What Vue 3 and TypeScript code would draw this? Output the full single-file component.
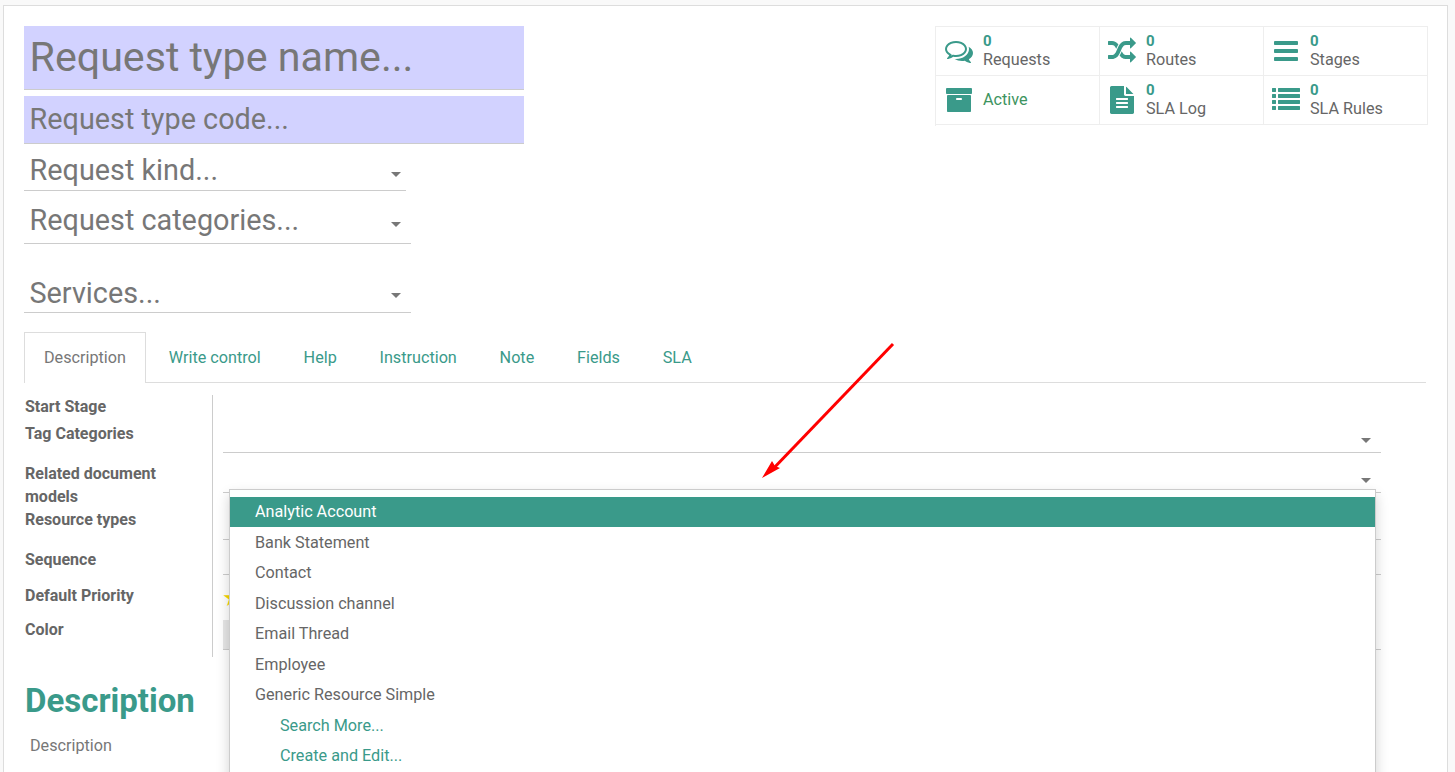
<script setup lang="ts">
type Stat = {
  label: string;
  count?: number;
  d: string;
};

const bars =
  "M1664 1344v128q0 26-19 45t-45 19h-1408q-26 0-45-19t-19-45v-128q0-26 19-45t45-19h1408q26 0 45 19t19 45zm0-512v128q0 26-19 45t-45 19h-1408q-26 0-45-19t-19-45v-128q0-26 19-45t45-19h1408q26 0 45 19t19 45zm0-512v128q0 26-19 45t-45 19h-1408q-26 0-45-19t-19-45v-128q0-26 19-45t45-19h1408q26 0 45 19t19 45z";

const stats: Stat[] = [
  {
    label: "Requests",
    count: 0,
    d: "M704 384q-153 0-286 52t-211.5 141-78.5 191q0 82 53 158t149 132l97 56-35 84q34-20 62-39l44-31 53 10q82 15 153 15 153 0 286-52t211.5-141 78.5-191-78.5-191-211.5-141-286-52zm0-128q191 0 353.5 68.5t256.5 186.5 94 257-94 257-256.5 186.5-353.5 68.5q-86 0-176-16-124 88-278 128-36 9-86 16h-3q-11 0-20.5-8t-11.5-21q-1-3-1-6.5t.5-6.5 2-6l2.5-5 3.5-5.5 4-5 4.5-5 4-4.5q5-6 23-25t26-29.5 22.5-29 25-38.5 20.5-44q-124-72-195-177t-71-224q0-139 94-257t256.5-186.5 353.5-68.5zm822 1169q10 24 20.5 44t25 38.5 22.5 29 26 29.5 23 25q1 1 4 4.5t4.5 5 4 5 3.5 5.5l2.5 5 2 6 .5 6.5-1 6.5q-3 14-13 22t-22 7q-50-7-86-16-154-40-278-128-90 16-176 16-271 0-472-132 58 4 88 4 161 0 309-45t264-129q125-92 192-212t67-254q0-77-23-152 129 71 204 178t75 230q0 120-71 224.5t-195 176.5z",
  },
  {
    label: "Routes",
    count: 0,
    d: "M666 481q-60 92-137 273-22-45-37-72.5t-40.5-63.5-51-56.5-63-35-81.5-14.5h-224q-14 0-23-9t-9-23v-192q0-14 9-23t23-9h224q250 0 410 225zm1126 799q0 14-9 23l-320 320q-9 9-23 9-13 0-22.5-9.5t-9.5-22.5v-192q-32 0-85 .5t-81 1-73-1-71-5-64-10.5-63-18.5-58-28.5-59-40-55-53.5-56-69.5q59-93 136-273 22 45 37 72.5t40.5 63.5 51 56.5 63 35 81.5 14.5h256v-192q0-14 9-23t23-9q12 0 24 10l319 319q9 9 9 23zm0-896q0 14-9 23l-320 320q-9 9-23 9-13 0-22.5-9.5t-9.5-22.5v-192h-256q-48 0-87 15t-69 45-51 61.5-45 77.5q-32 62-78 171-29 66-49.5 111t-54 105-64 100-74 83-90 68.5-106.5 42-128 16.5h-224q-14 0-23-9t-9-23v-192q0-14 9-23t23-9h224q48 0 87-15t69-45 51-61.5 45-77.5q32-62 78-171 29-66 49.5-111t54-105 64-100 74-83 90-68.5 106.5-42 128-16.5h256v-192q0-14 9-23t23-9q12 0 24 10l319 319q9 9 9 23z",
  },
  { label: "Stages", count: 0, d: bars },
  {
    label: "Active",
    d: "M1088 832q0-26-19-45t-45-19h-256q-26 0-45 19t-19 45 19 45 45 19h256q26 0 45-19t19-45zm576-192v960q0 26-19 45t-45 19h-1408q-26 0-45-19t-19-45v-960q0-26 19-45t45-19h1408q26 0 45 19t19 45zm64-448v256q0 26-19 45t-45 19h-1536q-26 0-45-19t-19-45v-256q0-26 19-45t45-19h1536q26 0 45 19t19 45z",
  },
  {
    label: "SLA Log",
    count: 0,
    d: "M1596 476q14 14 28 36h-472v-472q22 14 36 28zm-476 164h544v1056q0 40-28 68t-68 28h-1344q-40 0-68-28t-28-68v-1600q0-40 28-68t68-28h800v544q0 40 28 68t68 28zm160 736v-64q0-14-9-23t-23-9h-704q-14 0-23 9t-9 23v64q0 14 9 23t23 9h704q14 0 23-9t9-23zm0-256v-64q0-14-9-23t-23-9h-704q-14 0-23 9t-9 23v64q0 14 9 23t23 9h704q14 0 23-9t9-23zm0-256v-64q0-14-9-23t-23-9h-704q-14 0-23 9t-9 23v64q0 14 9 23t23 9h704q14 0 23-9t9-23z",
  },
  {
    label: "SLA Rules",
    count: 0,
    d: "M256 1312v192q0 14-9 23t-23 9h-192q-14 0-23-9t-9-23v-192q0-14 9-23t23-9h192q14 0 23 9t9 23zm0-384v192q0 14-9 23t-23 9h-192q-14 0-23-9t-9-23v-192q0-14 9-23t23-9h192q14 0 23 9t9 23zm0-384v192q0 14-9 23t-23 9h-192q-14 0-23-9t-9-23v-192q0-14 9-23t23-9h192q14 0 23 9t9 23zm1536 768v192q0 14-9 23t-23 9h-1344q-14 0-23-9t-9-23v-192q0-14 9-23t23-9h1344q14 0 23 9t9 23zm-1536-1152v192q0 14-9 23t-23 9h-192q-14 0-23-9t-9-23v-192q0-14 9-23t23-9h192q14 0 23 9t9 23zm1536 768v192q0 14-9 23t-23 9h-1344q-14 0-23-9t-9-23v-192q0-14 9-23t23-9h1344q14 0 23 9t9 23zm0-384v192q0 14-9 23t-23 9h-1344q-14 0-23-9t-9-23v-192q0-14 9-23t23-9h1344q14 0 23 9t9 23zm0-384v192q0 14-9 23t-23 9h-1344q-14 0-23-9t-9-23v-192q0-14 9-23t23-9h1344q14 0 23 9t9 23z",
  },
];

const tabs = ["Description", "Write control", "Help", "Instruction", "Note", "Fields", "SLA"];

const options = [
  "Analytic Account",
  "Bank Statement",
  "Contact",
  "Discussion channel",
  "Email Thread",
  "Employee",
  "Generic Resource Simple",
];
</script>

<template>
  <main class="page">
    <div class="sheet">
      <header class="head">
        <div class="titles">
          <div class="req name">Request type name...</div>
          <div class="req code">Request type code...</div>
          <div class="pick kind">Request kind...<i class="caret"></i></div>
          <div class="pick cats">Request categories...<i class="caret"></i></div>
          <div class="pick services">Services...<i class="caret"></i></div>
        </div>
        <div class="stats">
          <div v-for="stat in stats" :key="stat.label" class="stat">
            <svg class="stat-icon" viewBox="0 0 1792 1792" width="28" height="28">
              <path :d="stat.d" fill="currentColor" />
            </svg>
            <div class="stat-text">
              <b v-if="stat.count !== undefined">{{ stat.count }}</b>
              <span :class="{ active: stat.count === undefined }">{{ stat.label }}</span>
            </div>
          </div>
        </div>
      </header>

      <nav class="tabs">
        <a v-for="(tab, index) in tabs" :key="tab" class="tab" :class="{ current: index === 0 }">{{ tab }}</a>
      </nav>

      <section class="form">
        <div class="labels">
          <label class="l-stage">Start Stage</label>
          <label class="l-tags">Tag Categories</label>
          <label class="l-models">Related document models</label>
          <label class="l-types">Resource types</label>
          <label class="l-seq">Sequence</label>
          <label class="l-prio">Default Priority</label>
          <label>Color</label>
        </div>
        <div class="values">
          <div class="val v-stage"></div>
          <div class="val v-tags line"><i class="caret"></i></div>
          <div class="val v-models line"><i class="caret"></i></div>
          <div class="val v-types line"></div>
          <div class="val v-seq line"></div>
          <div class="val v-prio"><span class="star">★</span></div>
          <div class="val v-color line"><span class="swatch"></span></div>
        </div>

        <ul class="dropdown">
          <li v-for="(option, index) in options" :key="option" :class="{ hover: index === 0 }">{{ option }}</li>
          <li class="more">Search More...</li>
          <li class="more">Create and Edit...</li>
          <li class="blank"></li>
        </ul>
      </section>

      <h2 class="section">Description</h2>
      <p class="hint">Description</p>

      <svg class="arrow" width="160" height="150" viewBox="0 0 160 150">
        <line x1="153" y1="13" x2="31" y2="140" stroke="#ff0000" stroke-width="3" />
        <polygon points="22,147 32,130 35,135 40,137" fill="#ff0000" />
      </svg>
    </div>
  </main>
</template>

<style scoped>
.page {
  height: 772px;
  overflow: hidden;
  background: #f9f9f9;
  padding: 5px 7px 0 3px;
  box-sizing: border-box;
  font-family: Roboto, "Liberation Sans", sans-serif;
  color: #666;
}
.sheet {
  position: relative;
  height: 800px;
  box-sizing: border-box;
  background: #fff;
  border: 1px solid #ddd;
  padding: 20px 21px 0 20px;
}
.head {
  display: flex;
  justify-content: space-between;
  height: 306px;
}
.titles {
  width: 500px;
}
.req {
  background: #d2d2ff;
  border-bottom: 1px solid #ccc;
  box-sizing: border-box;
  padding-left: 5.5px;
  padding-bottom: 2px;
  color: #777;
  display: flex;
  align-items: center;
}
.name {
  height: 64px;
  font-size: 41.2px;
}
.code {
  height: 48px;
  margin-top: 6px;
  font-size: 28.8px;
}
.pick {
  position: relative;
  box-sizing: border-box;
  border-bottom: 1px solid #ccc;
  padding-left: 5.5px;
  font-size: 28.8px;
  color: #777;
  line-height: 34px;
}
.kind {
  width: 382px;
  height: 47px;
  padding-top: 9px;
}
.cats {
  width: 387px;
  height: 53px;
  padding-top: 12px;
}
.services {
  width: 387px;
  height: 69px;
  padding-top: 32px;
}
.caret {
  position: absolute;
  right: 10px;
  bottom: 12px;
  width: 0;
  height: 0;
  border-left: 5px solid transparent;
  border-right: 5px solid transparent;
  border-top: 5px solid #777;
}
.kind .caret {
  right: 5px;
  bottom: 13px;
}
.cats .caret {
  bottom: 16px;
}
.services .caret {
  bottom: 14px;
}
.stats {
  display: grid;
  grid-template-columns: repeat(3, 164px);
  grid-auto-rows: 49px;
  align-content: start;
  margin-right: -2px;
  height: 99px;
  border-top: 1px solid #eee;
  border-left: 1px solid #eee;
}
.stat {
  display: flex;
  align-items: center;
  gap: 10px;
  padding-left: 8px;
  border-right: 1px solid #eee;
  border-bottom: 1px solid #eee;
}
.stat:nth-child(3n + 1) {
  padding-left: 9px;
}
.stat-icon {
  color: #3a9a8a;
  flex: none;
}
.stat-text {
  display: flex;
  flex-direction: column;
  padding-bottom: 1px;
  font-size: 16.2px;
  line-height: 18px;
}
.stat-text span {
  margin-top: 1px;
}
.stat-text b {
  color: #3a9a8a;
  font-weight: 700;
  font-size: 15px;
}
.stat-text .active {
  color: #3d9460;
}
.tabs {
  display: flex;
  height: 50px;
  border-bottom: 1px solid #ddd;
}
.tab {
  display: flex;
  align-items: center;
  padding: 0 19.9px;
  margin-right: 1px;
  font-size: 16.2px;
  color: #3a9a8a;
  border: 1px solid transparent;
  border-bottom: 0;
}
.tab.current {
  color: #777;
  padding: 0 19px 1px;
  margin-right: 2px;
  background: #fff;
  border-color: #ddd;
  height: 51px;
  box-sizing: border-box;
}
.form {
  position: relative;
  display: flex;
  margin-top: 12px;
  height: 262px;
}
.labels {
  width: 187px;
  flex: none;
  display: flex;
  flex-direction: column;
  padding-left: 1px;
  font-size: 16px;
  font-weight: 700;
  line-height: 23px;
  color: #666;
  border-right: 1px solid #ccc;
  height: 262px;
}
.labels label {
  display: block;
  width: 160px;
}
.l-stage {
  height: 24px;
}
.l-tags {
  padding-top: 3px;
  height: 37px;
}
.l-models {
  height: 46px;
  margin-top: 3px;
}
.l-types {
  height: 40px;
}
.l-seq {
  height: 36px;
}
.l-prio {
  height: 34px;
}
.values {
  margin-left: 10px;
  width: 1158px;
  display: flex;
  flex-direction: column;
}
.val {
  position: relative;
  box-sizing: border-box;
}
.line {
  border-bottom: 1px solid #ccc;
}
.v-stage {
  height: 24px;
}
.v-tags {
  height: 34px;
}
.v-models {
  height: 40px;
}
.v-types {
  height: 47px;
}
.v-seq {
  height: 35px;
}
.v-prio {
  height: 45px;
}
.v-color {
  height: 30px;
}
.val .caret {
  right: 10px;
  bottom: 9px;
}
.star {
  position: absolute;
  left: -1px;
  top: 11px;
  color: #f7d600;
  font-size: 24px;
  line-height: 24px;
}
.swatch {
  display: block;
  width: 60px;
  height: 29px;
  background: #e6e6e6;
}
.dropdown {
  position: absolute;
  left: 205px;
  top: 94px;
  width: 1147px;
  box-sizing: border-box;
  margin: 0;
  padding: 7px 0 0;
  list-style: none;
  background: #fff;
  border: 1px solid #ccc;
  box-shadow: 0 6px 12px rgba(0, 0, 0, 0.18);
  font-size: 16.2px;
  z-index: 2;
}
.dropdown li {
  height: 30.5px;
  line-height: 29.5px;
  padding-left: 25px;
  color: #666;
}
.dropdown li.hover {
  background: #3a9a8a;
  color: #fff;
  height: 30px;
  margin-bottom: 0.5px;
}
.dropdown li.more {
  padding-left: 50px;
  color: #3a9a8a;
}
.dropdown li.blank {
  height: 60px;
}
.section {
  margin: 24px 0 0 1px;
  font-size: 33px;
  line-height: 40px;
  font-weight: 700;
  color: #3a9a8a;
}
.hint {
  margin: 15px 0 0 6px;
  font-size: 16.2px;
  line-height: 20px;
  color: #777;
}
.arrow {
  position: absolute;
  left: 736px;
  top: 325px;
  z-index: 3;
}
</style>

<style>
html,
body {
  margin: 0;
  overflow: hidden;
}
</style>
